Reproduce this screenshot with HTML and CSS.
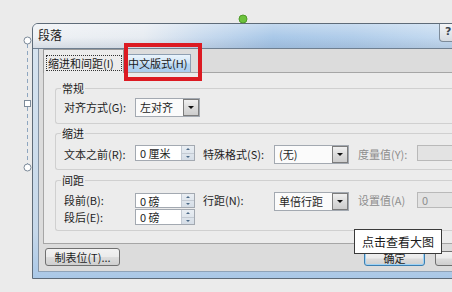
FILE: index.html
```html
<!DOCTYPE html>
<html lang="zh-CN">
<head>
<meta charset="utf-8">
<title>段落</title>
<link rel="stylesheet" href="styles.css">
</head>
<body>
<div class="stage">
  <div class="dialog">
    <div class="titlebar">
      <span class="title">段落</span>
      <span class="help">?</span>
    </div>
    <div class="frame">
      <div class="client">
        <div class="tabstrip">
          <div class="tab tab-active"><span class="focus">缩进和间距(I)</span></div>
          <div class="tab tab-hover">中文版式(H)</div>
        </div>
        <div class="panel">
          <fieldset class="group g1">
            <legend>常规</legend>
            <div class="grid rows-1">
              <span class="lbl">对齐方式(G):</span>
              <div class="select w65"><span class="sel-val">左对齐</span><span class="sel-btn"></span></div>
            </div>
          </fieldset>
          <fieldset class="group g2">
            <legend>缩进</legend>
            <div class="grid rows-1">
              <span class="lbl">文本之前(R):</span>
              <div class="spin"><span class="spin-val">0 厘米</span><span class="spin-btns"><i class="up"></i><i class="down"></i></span></div>
              <span class="lbl">特殊格式(S):</span>
              <div class="select w75"><span class="sel-val">(无)</span><span class="sel-btn"></span></div>
              <span class="lbl dis">度量值(Y):</span>
              <div class="dis-input"></div>
            </div>
          </fieldset>
          <fieldset class="group g3">
            <legend>间距</legend>
            <div class="grid rows-2">
              <span class="lbl">段前(B):</span>
              <div class="spin s1"><span class="spin-val">0 磅</span><span class="spin-btns"><i class="up"></i><i class="down"></i></span></div>
              <span class="lbl">行距(N):</span>
              <div class="select w75"><span class="sel-val">单倍行距</span><span class="sel-btn"></span></div>
              <span class="lbl dis">设置值(A)</span>
              <div class="dis-input">0</div>
              <span class="lbl">段后(E):</span>
              <div class="spin"><span class="spin-val">0 磅</span><span class="spin-btns"><i class="up"></i><i class="down"></i></span></div>
            </div>
          </fieldset>
        </div>
        <div class="buttons">
          <button class="btn btn-tabs">制表位(T)...</button>
          <button class="btn btn-ok">确定</button>
          <button class="btn btn-cancel" aria-label="取消"></button>
        </div>
      </div>
    </div>
  </div>

  <svg class="handles" width="452" height="292" viewBox="0 0 452 292">
    <line x1="27.5" y1="44" x2="27.5" y2="164" stroke="#8ea6c0" stroke-width="1" stroke-dasharray="4 3"/>
    <circle cx="27.5" cy="40.5" r="3.5" fill="#ffffff" stroke="#7c8a99"/>
    <rect x="24.5" y="100.5" width="6" height="6" fill="#ffffff" stroke="#7c8a99"/>
    <circle cx="27.5" cy="167.5" r="3.5" fill="#ffffff" stroke="#7c8a99"/>
    <circle cx="243" cy="19" r="4" fill="#6cc23c" stroke="#4f9a2a"/>
  </svg>

  <div class="highlight"></div>
  <div class="tooltip">点击查看大图</div>
</div>
</body>
</html>
```

FILE: styles.css
```css
* { box-sizing: border-box; }
html, body { margin: 0; padding: 0; }
body {
  background: #ebebeb;
  font-family: "Noto Sans CJK SC", "Noto Sans", sans-serif;
  font-size: 11px;
  color: #1e1e1e;
}
.stage {
  position: relative;
  width: 452px;
  height: 292px;
  overflow: hidden;
  background: #ebebeb;
}

/* dialog window */
.dialog {
  position: absolute;
  left: 32px;
  top: 23px;
  width: 446px;
  height: 256px;
  border: 1px solid #5e6b78;
  border-radius: 6px 6px 0 0;
  background: #c3d6ea;
  display: flex;
  flex-direction: column;
  overflow: hidden;
}
.titlebar {
  height: 25px;
  flex: 0 0 25px;
  border-bottom: 1px solid #6f7f90;
  display: grid;
  grid-template-columns: 1fr 30px;
  padding: 0 8px 0 5px;
  background:
    linear-gradient(180deg, rgba(255,255,255,0.3) 0%, rgba(255,255,255,0) 55%, rgba(70,95,130,0.14) 100%),
    linear-gradient(90deg, #eef1f4 0px, #e7ecf2 110px, #c8daee 170px, #a9c8e8 240px, #b1cdea 320px, #c4daf0 410px);
}
.title {
  font-size: 12px;
  line-height: 22px;
  color: #1a1a1a;
}
.help {
  align-self: start;
  height: 18px;
  border: 1px solid #7d8b99;
  border-top: 0;
  border-radius: 0 0 4px 4px;
  background: linear-gradient(#f4f5f7, #d6dbe1);
  font-family: "DejaVu Sans", sans-serif;
  font-weight: bold;
  font-size: 11px;
  line-height: 16px;
  color: #3c4650;
  padding-left: 5px;
}
.frame {
  flex: 1;
  padding: 0 0 6px 5px;
  background: linear-gradient(180deg, #d6e3ef 0%, #c6d8ea 80%, #aac8e7 100%);
}
.client {
  height: 100%;
  border-left: 1px solid #8593a3;
  border-bottom: 1px solid #8fa3b8;
  background: #dcdcdc;
  padding-left: 4px;
  display: flex;
  flex-direction: column;
}

/* tabs */
.tabstrip {
  height: 23px;
  flex: 0 0 23px;
  display: flex;
  align-items: flex-end;
}
.tab {
  flex-shrink: 0;
  color: #1a1a1a;
  white-space: nowrap;
}
.tab-active {
  position: relative;
  z-index: 1;
  width: 81px;
  height: 24px;
  margin-bottom: -1px;
  border: 1px solid #999;
  border-bottom: 0;
  background: #ececec;
  padding: 5px 1px 2px 2px;
}
.focus {
  display: block;
  height: 16px;
  border: 1px dotted #333;
  line-height: 14px;
  padding-left: 1px;
}
.tab-hover {
  width: 68px;
  height: 18px;
  margin-left: -1px;
  border: 1px solid #8e9fb2;
  border-bottom: 0;
  background: linear-gradient(180deg, #eaf4fc 0%, #d0e5f7 45%, #b6d5f1 55%, #aacdef 100%);
  line-height: 16px;
  padding-left: 4px;
}

/* panel */
.panel {
  height: 172px;
  flex: 0 0 172px;
  border: 1px solid #a6a6a6;
  border-right: 0;
  background: #ececec;
  padding: 8px 0 12px 11px;
}
.group {
  margin: 0;
  min-width: 0;
  border: 1px solid #d0d0d0;
  border-right: 0;
  border-radius: 3px 0 0 3px;
  padding: 3px 0 6px 8px;
}
.group legend {
  padding: 0 1px;
  margin-left: -3px;
  line-height: 14px;
  font-size: 11px;
  color: #1a1a1a;
}
.g2 { margin-top: 2px; padding: 5px 0 5px 8px; }
.g3 { margin-top: 3px; padding: 5px 0 5px 8px; }

.grid {
  display: grid;
  grid-template-columns: 71px 68px 71px 84px 59px 60px;
  align-items: start;
}
.rows-1 { grid-template-rows: 19px; }
.rows-2 { grid-template-rows: 17px 16px; }
.lbl {
  white-space: nowrap;
  line-height: 19px;
  color: #1e1e1e;
}
.rows-2 .lbl { line-height: 17px; }
.lbl.dis { color: #8e8e8e; }

/* controls */
.select {
  display: flex;
  height: 19px;
  border: 1px solid #a3a9b1;
  background: #fbfbfb;
}
.w65 { width: 65px; }
.w75 { width: 75px; }
.sel-val {
  flex: 1;
  padding-left: 4px;
  line-height: 17px;
  white-space: nowrap;
}
.sel-btn {
  width: 16px;
  border: 1px solid #7c7c7c;
  background: linear-gradient(180deg, #f0f0f0 0%, #dcdcdc 50%, #cdcdcd 100%);
  display: flex;
  align-items: center;
  justify-content: center;
}
.sel-btn::after {
  content: "";
  border-left: 3px solid transparent;
  border-right: 3px solid transparent;
  border-top: 3px solid #111;
}
.spin {
  display: flex;
  width: 60px;
  height: 16px;
  border: 1px solid #a3a9b1;
  background: #fff;
}
.spin.s1 { height: 15px; margin-top: 1px; }
.spin-val {
  flex: 1;
  padding-left: 4px;
  line-height: 14px;
  white-space: nowrap;
}
.spin-btns {
  width: 13px;
  display: flex;
  flex-direction: column;
  border-left: 1px solid #c3cad3;
  background: linear-gradient(180deg, #e9eef3, #d5dde6);
}
.spin-btns i {
  flex: 1;
  display: flex;
  align-items: center;
  justify-content: center;
}
.spin-btns i.up { border-bottom: 1px solid #c3cad3; }
.spin-btns i.up::after {
  content: "";
  border-left: 2px solid transparent;
  border-right: 2px solid transparent;
  border-bottom: 2px solid #4c6a88;
}
.spin-btns i.down::after {
  content: "";
  border-left: 2px solid transparent;
  border-right: 2px solid transparent;
  border-top: 2px solid #4c6a88;
}
.dis-input {
  width: 60px;
  height: 16px;
  border: 1px solid #b9b9b9;
  background: #e3e3e3;
  color: #8e8e8e;
  padding-left: 4px;
  line-height: 14px;
}

/* buttons */
.buttons {
  flex: 1;
  display: flex;
  align-items: flex-start;
  padding: 4px 0 0 2px;
}
.btn {
  flex-shrink: 0;
  font-family: "Noto Sans CJK SC", "Noto Sans", sans-serif;
  font-size: 11px;
  color: #1e1e1e;
  height: 18px;
  padding: 0;
  line-height: 16px;
  border: 1px solid #707070;
  border-radius: 3px;
  background: linear-gradient(180deg, #f2f2f2 0%, #ebebeb 48%, #dddddd 52%, #cfcfcf 100%);
  white-space: nowrap;
}
.btn-tabs { width: 75px; }
.btn-ok {
  width: 61px;
  height: 15px;
  line-height: 13px;
  margin-top: 3px;
  margin-left: 244px;
  border-color: #3c7fb1;
  box-shadow: inset 0 0 0 1px #9fd3f5;
}
.btn-cancel {
  width: 61px;
  height: 15px;
  margin-top: 3px;
  margin-left: 10px;
}

/* overlays */
.handles {
  position: absolute;
  left: 0;
  top: 0;
  pointer-events: none;
}
.highlight {
  position: absolute;
  left: 124px;
  top: 43px;
  width: 78px;
  height: 38px;
  border: 4px solid #dc1a22;
}
.tooltip {
  position: absolute;
  left: 354px;
  top: 229px;
  width: 88px;
  height: 25px;
  border: 1px solid #3a3a3a;
  background: #fff;
  font-size: 12px;
  line-height: 23px;
  text-align: center;
  color: #1a1a1a;
}
```
